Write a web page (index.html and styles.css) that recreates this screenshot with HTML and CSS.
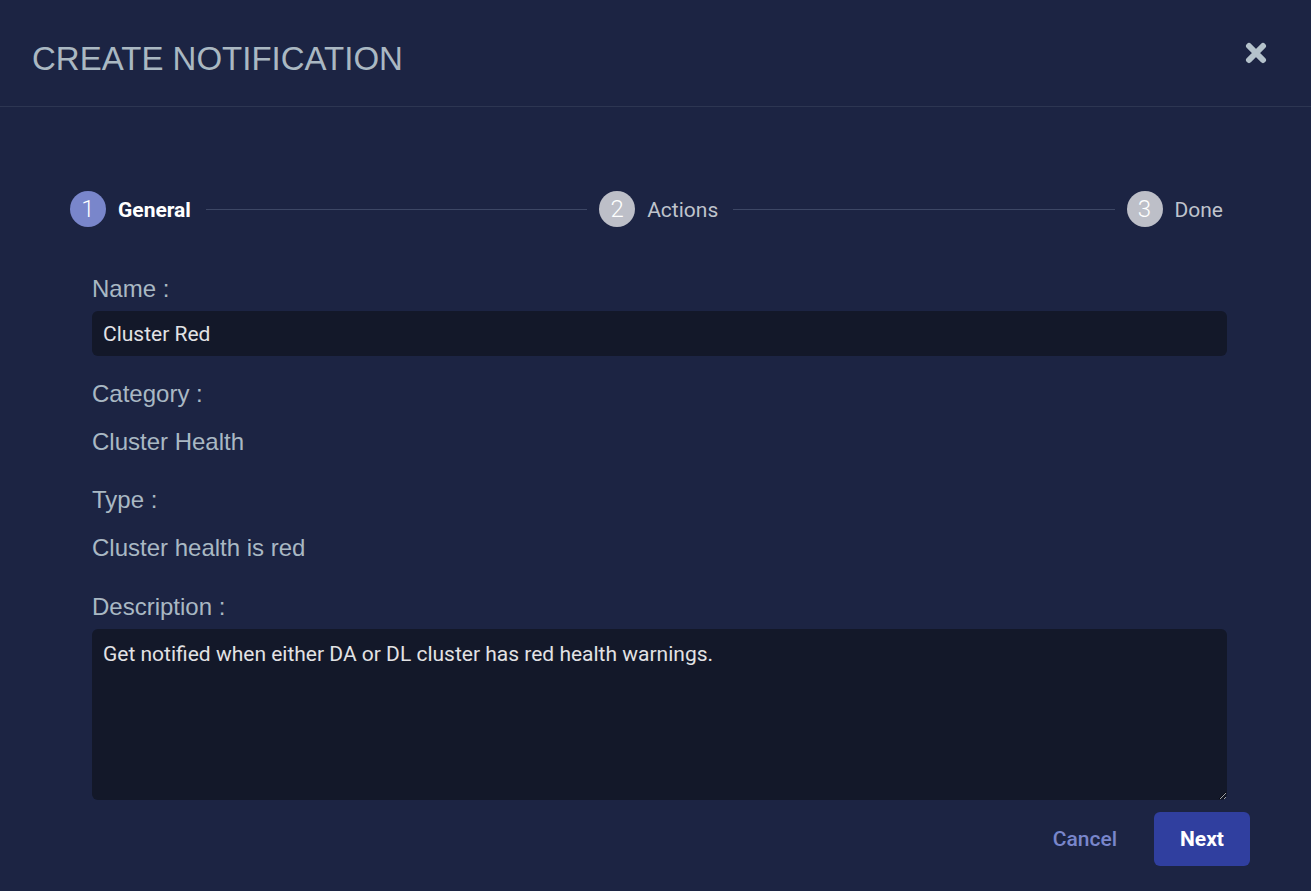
FILE: index.html
```html
<!DOCTYPE html>
<html>
<head>
<meta charset="utf-8">
<link rel="stylesheet" href="styles.css">
</head>
<body>
<div class="dialog">
  <header class="header">
    <h1 class="title">CREATE NOTIFICATION</h1>
    <button class="close" aria-label="close">
      <svg width="22" height="22" viewBox="0 0 22 22"><path d="M4 4 L18 18 M18 4 L4 18" stroke="#b4c2cb" stroke-width="6" stroke-linecap="round" fill="none"/></svg>
    </button>
  </header>
  <main class="body">
    <div class="stepper">
      <div class="step active"><span class="circle">1</span><span class="step-label">General</span></div>
      <div class="connector"></div>
      <div class="step"><span class="circle">2</span><span class="step-label">Actions</span></div>
      <div class="connector"></div>
      <div class="step"><span class="circle">3</span><span class="step-label">Done</span></div>
    </div>
    <form class="form">
      <label class="label">Name :</label>
      <input class="input" type="text" value="Cluster Red">
      <div class="label sec">Category :</div>
      <div class="value">Cluster Health</div>
      <div class="label sec2">Type :</div>
      <div class="value">Cluster health is red</div>
      <div class="label sec3">Description :</div>
      <textarea class="textarea">Get notified when either DA or DL cluster has red health warnings.</textarea>
    </form>
    <div class="actions">
      <button class="btn-cancel" type="button">Cancel</button>
      <button class="btn-next" type="button">Next</button>
    </div>
  </main>
</div>
</body>
</html>
```
FILE: styles.css
```css
* { box-sizing: border-box; }
html, body { margin: 0; padding: 0; }
body {
  background: #1c2443;
  width: 1311px;
  height: 891px;
  overflow: hidden;
  font-family: "Liberation Sans", Arial, sans-serif;
}
.dialog { width: 1311px; height: 891px; }
.header {
  height: 107px;
  border-bottom: 1px solid #2d3652;
  display: flex;
  align-items: center;
  justify-content: space-between;
  padding: 0 44px 0 32px;
}
.title {
  margin: 0;
  font-weight: 400;
  font-size: 33px;
  color: #aab8c2;
  letter-spacing: 0;
  position: relative;
  top: 6px;
}
.close {
  background: none;
  border: 0;
  padding: 0;
  width: 22px;
  height: 22px;
  display: flex;
}
.body { padding: 84px 84px 0 92px; }
.stepper {
  display: flex;
  align-items: center;
  margin-left: -22px;
  margin-right: 4px;
  height: 36px;
}
.step { display: flex; align-items: center; }
.circle {
  width: 36px;
  height: 36px;
  border-radius: 50%;
  background: #bdbfc8;
  color: #fff;
  font-family: Roboto, sans-serif;
  font-weight: 300;
  font-size: 24px;
  display: flex;
  align-items: center;
  justify-content: center;
}
.step.active .circle { background: #7986cb; }
.step-label {
  margin-left: 12px;
  font-family: Roboto, sans-serif;
  font-size: 21px;
  color: #bfc3cc;
  position: relative;
  top: 1px;
}
.step.active .step-label { color: #fff; font-weight: 700; }
.connector {
  flex: 1;
  height: 1px;
  background: #3d4765;
  margin: 0 12px 0 15px;
}
.form { display: flex; flex-direction: column; margin-top: 47px; }
.label {
  font-size: 24px;
  line-height: 30px;
  color: #a9b8c3;
  margin-bottom: 7px;
}
.label.sec { margin-top: 23px; }
.label.sec2 { margin-top: 28px; }
.label.sec3 { margin-top: 29px; }
.value {
  font-size: 24px;
  line-height: 30px;
  color: #a9b8c3;
  margin-top: 11px;
}
.input, .textarea {
  background: #131829;
  border: 0;
  border-radius: 6px;
  color: #e2e2e4;
  font-family: Roboto, sans-serif;
  font-size: 21px;
  padding: 0 11px;
  outline: none;
}
.input { height: 45px; }
.textarea {
  height: 171px;
  padding-top: 13px;
  resize: vertical;
  line-height: 1.2;
}
.actions {
  display: flex;
  justify-content: flex-end;
  align-items: center;
  margin-top: 12px;
  margin-right: -23px;
}
.btn-cancel {
  background: none;
  border: 0;
  color: #7986cb;
  font-family: Roboto, sans-serif;
  font-weight: 500;
  font-size: 21px;
  padding: 0;
  margin-right: 37px;
}
.btn-next {
  width: 96px;
  height: 54px;
  background: #303f9f;
  border: 0;
  border-radius: 6px;
  color: #fff;
  font-family: Roboto, sans-serif;
  font-weight: 700;
  font-size: 21px;
}
```
